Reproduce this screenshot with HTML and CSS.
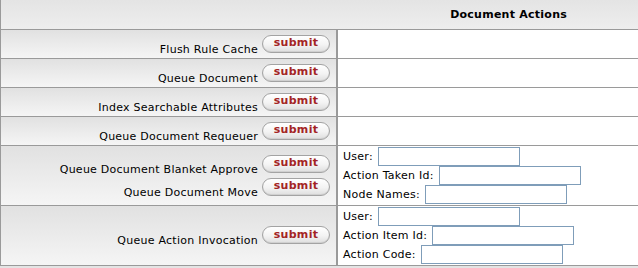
FILE: index.html
```html
<!DOCTYPE html>
<html lang="en">
<head>
    <meta charset="UTF-8">
    <title>Document Actions</title>
    <link rel="stylesheet" href="styles.css">
</head>
<body>
    <table class="actions">
        <colgroup>
            <col class="label-col">
            <col class="field-col">
        </colgroup>
        <tr>
            <th class="head" colspan="2">Document Actions</th>
        </tr>
        <tr>
            <td class="label-cell">
                <div class="action"><span>Flush Rule Cache</span><button class="submit">submit</button></div>
            </td>
            <td class="field-cell"></td>
        </tr>
        <tr>
            <td class="label-cell">
                <div class="action"><span>Queue Document</span><button class="submit">submit</button></div>
            </td>
            <td class="field-cell"></td>
        </tr>
        <tr>
            <td class="label-cell">
                <div class="action"><span>Index Searchable Attributes</span><button class="submit">submit</button></div>
            </td>
            <td class="field-cell"></td>
        </tr>
        <tr>
            <td class="label-cell">
                <div class="action"><span>Queue Document Requeuer</span><button class="submit">submit</button></div>
            </td>
            <td class="field-cell"></td>
        </tr>
        <tr>
            <td class="label-cell">
                <div class="action"><span>Queue Document Blanket Approve</span><button class="submit">submit</button></div>
                <div class="action"><span>Queue Document Move</span><button class="submit">submit</button></div>
            </td>
            <td class="field-cell">
                <div class="field"><label for="baUser">User:</label><input type="text" id="baUser"></div>
                <div class="field"><label for="takenId">Action Taken Id:</label><input type="text" id="takenId"></div>
                <div class="field"><label for="nodeNames">Node Names:</label><input type="text" id="nodeNames"></div>
            </td>
        </tr>
        <tr>
            <td class="label-cell">
                <div class="action"><span>Queue Action Invocation</span><button class="submit">submit</button></div>
            </td>
            <td class="field-cell">
                <div class="field"><label for="aiUser">User:</label><input type="text" id="aiUser"></div>
                <div class="field"><label for="itemId">Action Item Id:</label><input type="text" id="itemId"></div>
                <div class="field"><label for="actionCode">Action Code:</label><input type="text" id="actionCode"></div>
            </td>
        </tr>
    </table>
    <div class="next-strip"></div>
</body>
</html>
```

FILE: styles.css
```css
body { margin: 0; font-family: "DejaVu Sans", Verdana, sans-serif; font-size: 11px; letter-spacing: 0.25px; color: #000; background: #fff; }
.actions { width: 638px; border-collapse: separate; border-spacing: 0; table-layout: fixed; }
.label-col { width: 338px; }
.field-col { width: 300px; }
.head { height: 29px; padding: 0 71px 0 0; text-align: right; font-weight: bold; font-size: 11px; background: linear-gradient(#e4e4e4, #eeeeee); border-left: 1px solid #9a9a9a; border-bottom: 1px solid #9a9a9a; }
.label-cell { height: 28px; padding: 0 6px 0 0; text-align: right; vertical-align: middle; background: linear-gradient(#e1e1e1, #f5f5f5); border-left: 1px solid #9a9a9a; border-bottom: 1px solid #9a9a9a; border-right: 2px solid #9a9a9a; }
.field-cell { height: 26px; padding: 1px 0 1px 5px; vertical-align: top; background: #fff; border-bottom: 1px solid #9a9a9a; }
.action { display: flex; justify-content: flex-end; align-items: flex-end; gap: 4px; padding: 2px 0 3px; }
.action span { line-height: 13px; margin-bottom: -3px; }
.submit { width: 68px; height: 18px; padding: 0 0 1px; border: 1px solid #a3a3a3; border-radius: 9px; background: linear-gradient(#ffffff, #f3f3f3 55%, #dedede); box-shadow: inset 0 -1px 0 #d0d0d0; font-family: "DejaVu Sans", Verdana, sans-serif; font-size: 11px; font-weight: bold; letter-spacing: 0.3px; line-height: 14px; color: #a32424; cursor: pointer; }
.field { display: flex; align-items: center; height: 19px; white-space: nowrap; }
.field label { margin-right: 5px; }
.field input { width: 142px; height: 19px; box-sizing: border-box; margin: 0; padding: 0 2px; border: 1px solid #7f9db9; font-family: inherit; font-size: 11px; }
.next-strip { height: 2px; background: #e4e4e4; }
```
